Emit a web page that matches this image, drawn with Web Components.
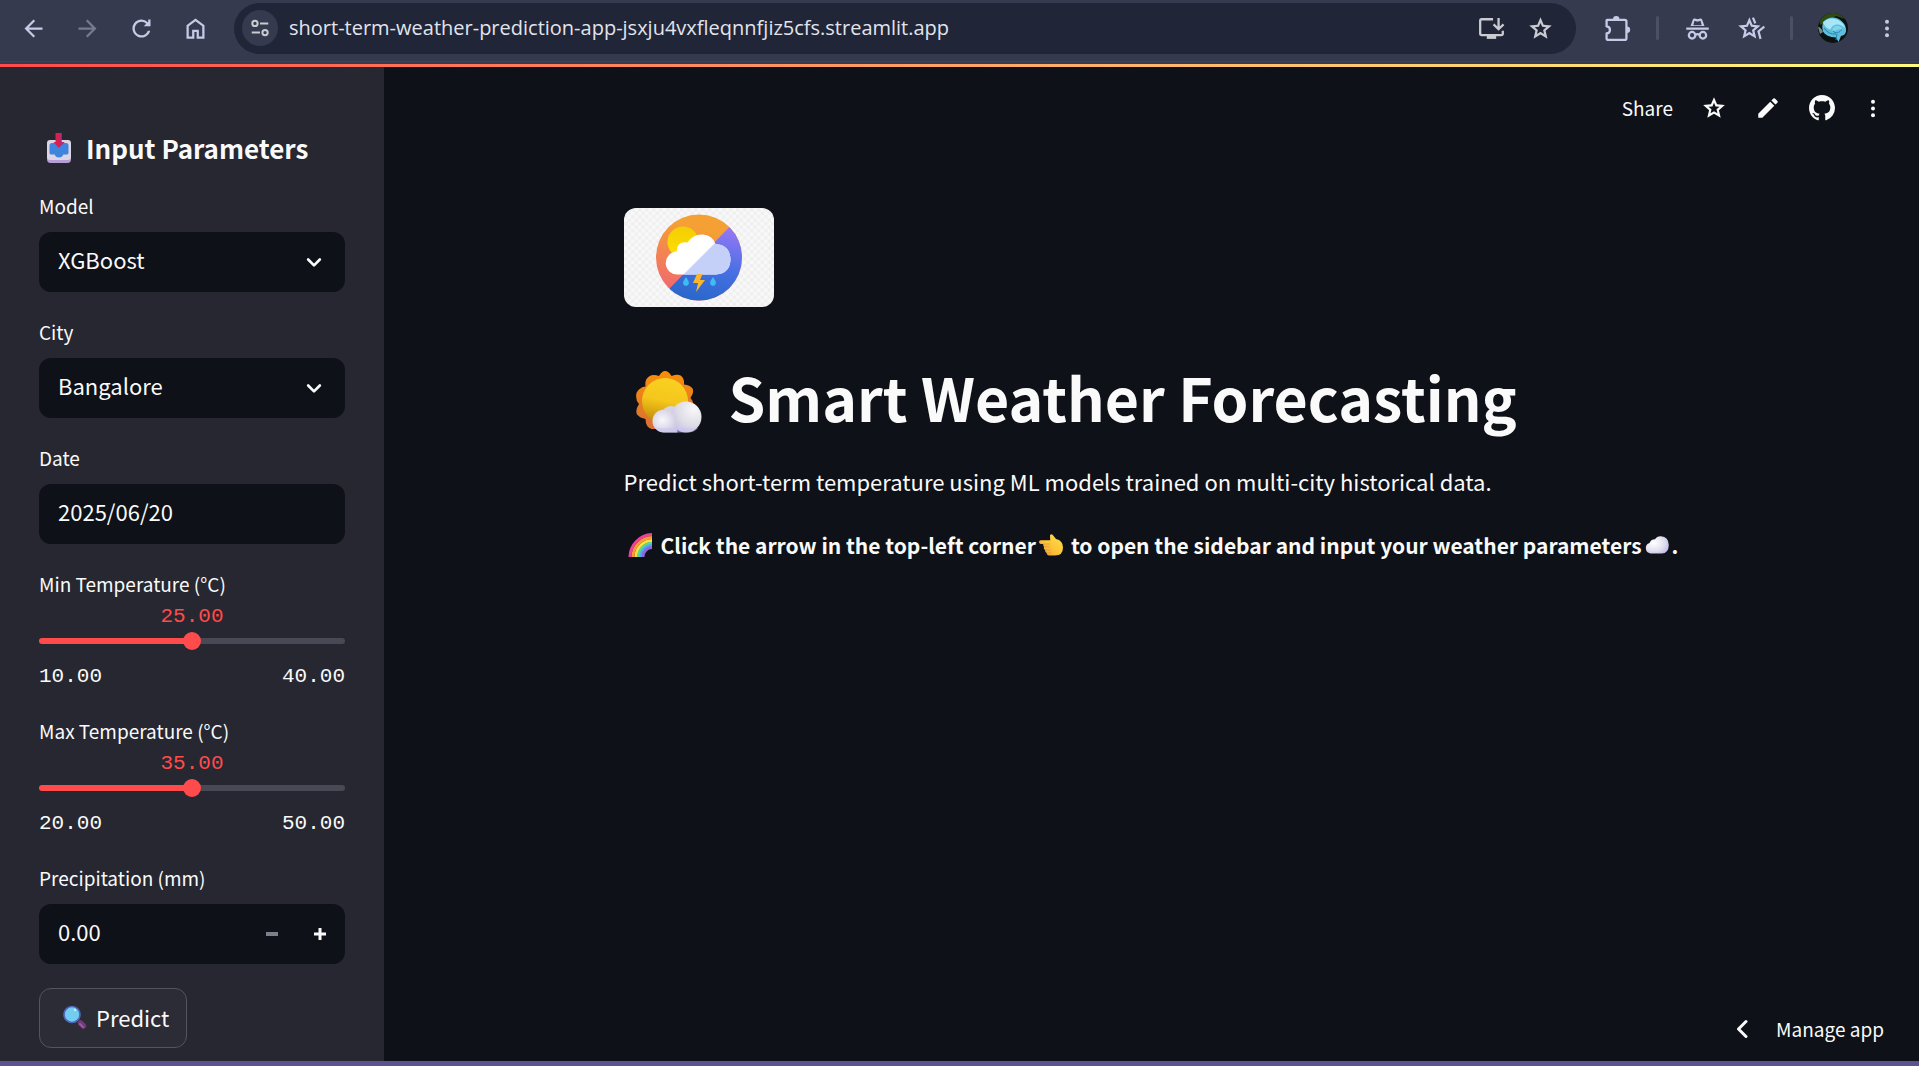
<!DOCTYPE html>
<html lang="en">
<head>
<meta charset="utf-8">
<title>Smart Weather Forecasting</title>
<style>
html, body { margin: 0; height: 100%; }
body {
  background: #0e1117;
  color: #fafafa;
  font-family: "Noto Sans CJK SC", "Noto Sans", sans-serif;
  font-size: 22px;
}
</style>
</head>
<body>
<weather-page></weather-page>

<script>
const ICONS = {
  back: ['0 0 24 24', '<path d="M20 11v2H7.8l5.6 5.6L12 20l-8-8 8-8 1.4 1.4L7.8 11z"/>'],
  forward: ['0 0 24 24', '<path d="M4 11v2h12.2l-5.6 5.6L12 20l8-8-8-8-1.4 1.4 5.6 5.6z"/>'],
  reload: ['0 0 24 24', '<path d="M17.65 6.35A8 8 0 1 0 19.73 14h-2.08A6 6 0 1 1 12 6c1.66 0 3.14.69 4.22 1.78L14 10h6V4h-2v2z"/>'],
  home: ['0 0 24 24', '<path d="M6 19h3v-6h6v6h3v-9l-6-4.5L6 10zM4 21V9l8-6 8 6v12h-7v-6h-2v6z"/>'],
  tune: ['0 0 24 24', '<g fill="none" stroke="currentColor" stroke-width="2.2"><circle cx="6.5" cy="7" r="2.9"/><path d="M12 7h9M3 17h9"/><circle cx="17.5" cy="17" r="2.9"/></g>'],
  install: ['0 0 26 24', '<path fill="none" stroke="currentColor" stroke-width="2.2" d="M14.5 3.1H3.6q-1.5 0-1.5 1.5v12.3q0 1.500 1.500 1.500h18.800q1.500 0 1.500-1.500v-2.700"/><path d="M8.500 18h9v4h-9z"/><path fill="none" stroke="currentColor" stroke-width="2.200" d="M19.800 2v10M15 8l4.800 4.700L24.600 8"/>'],
  star: ['0 0 24 24', '<path d="m8.850 16.825 3.150-1.900 3.150 1.925-.825-3.600 2.775-2.400-3.650-.325-1.450-3.400-1.450 3.375-3.650.325 2.775 2.425zM5.825 21l1.625-7.025L2 9.250l7.200-.625L12 2l2.800 6.625 7.200.625-5.450 4.725L18.175 21 12 17.275z"/>'],
  puzzle: ['0 0 26 26', '<path fill="none" stroke="currentColor" stroke-width="2.200" stroke-linejoin="round" d="M3 4.600h17q1.600 0 1.600 1.600v16.100q0 1.600-1.600 1.600H4q-1.500 0-1.500-1.600v-4.600c4.300-.4 4.300-6.300 0-6.700V5.100z"/><path d="M8.700 4a3.100 3.100 0 0 1 6.200 0zM22 11a3.200 3.200 0 0 1 0 6.400z"/>'],
  incognito: ['0 0 24 24', '<path d="M2 11h20v2H2zM5.800 9.800 8 3.800q.4-1 1.500-.7l1.700.5q.8.200 1.600 0l1.700-.5q1.100-.3 1.500.7l2.200 6z"/><path fill="#353a4e" d="m9.300 5.200 2 .6h1.400l2-.6 1 3.800H8.300z"/><g fill="none" stroke="currentColor" stroke-width="2"><circle cx="7.200" cy="18" r="2.900"/><circle cx="16.800" cy="18" r="2.900"/><path d="M10 17.500q2-1.100 4 0"/></g>'],
  starlines: ['0 0 26 24', '<path d="m8.850 16.825 3.150-1.900 3.150 1.925-.825-3.600 2.775-2.400-3.650-.325-1.450-3.400-1.450 3.375-3.650.325 2.775 2.425zM5.825 21l1.625-7.025L2 9.250l7.200-.625L12 2l2.800 6.625 7.200.625-5.450 4.725L18.175 21 12 17.275z"/><path fill="none" stroke="currentColor" stroke-width="2" d="m15.200 2.200 2.100 5.200M25.400 10.400l-5.200 4.300 1.800 6.600"/>'],
  dots: ['0 0 24 24', '<circle cx="12" cy="4" r="2.400"/><circle cx="12" cy="12" r="2.400"/><circle cx="12" cy="20" r="2.400"/>'],
  avatar: ['0 0 30 30', '<defs><clipPath id="c"><circle cx="15" cy="15" r="15"/></clipPath></defs><g clip-path="url(#c)"><path fill="#0b1210" d="M0 0h30v30H0z"/><path fill="#2f4a12" d="M0 0h30v7L18 3 2 12z"/><path fill="#6f8d86" d="M0 14q3 0 5 5l-3 2z"/><path fill="#5fbddd" d="M5 9q4-4.500 10-4.500 5 0 9 4 4.500 4 4 10-1 4-5 4.500l-2.500 6-2.500-4.500Q8 24 5 18.500q-1.500-5 0-9.500z"/><path fill="#a5e6f7" d="M5 9.500Q12 3 20 7q6 3 7.500 9-4-5-9-4.500-4.500.5-6 5-5-1-7.500-7z"/><path fill="#7fd3ec" d="M14 17q2-5 7-4 4 1 4 5-3-3-6-1-2 2-5 0z"/><path fill="none" stroke="#2587a8" d="M6 15q5 7 12 6M15 18c2 3 7 2 9-2M19 21l-1 6"/></g>'],
  pencil: ['0 0 24 24', '<path d="M3 17.250V21h3.750L17.810 9.940l-3.750-3.750zM20.710 7.040a1 1 0 0 0 0-1.410l-2.340-2.340a1 1 0 0 0-1.410 0l-1.830 1.830 3.750 3.750z"/>'],
  github: ['0 0 16 16', '<path d="M8 0C3.580 0 0 3.580 0 8c0 3.540 2.290 6.530 5.470 7.590.4.070.55-.17.55-.38 0-.19-.01-.82-.01-1.490-2.010.37-2.530-.49-2.690-.94-.09-.23-.48-.94-.82-1.130-.28-.15-.68-.52-.01-.53.63-.01 1.080.58 1.230.82.72 1.210 1.870.87 2.330.66.070-.52.28-.87.51-1.070-1.780-.2-3.640-.89-3.640-3.950 0-.87.31-1.590.82-2.150-.08-.2-.36-1.020.08-2.120 0 0 .67-.21 2.200.82.64-.18 1.320-.27 2-.27s1.360.09 2 .27c1.530-1.040 2.200-.82 2.200-.82.44 1.100.16 1.920.08 2.120.51.56.82 1.270.82 2.150 0 3.070-1.870 3.750-3.650 3.950.29.25.54.73.54 1.480 0 1.070-.01 1.930-.01 2.200 0 .21.15.46.55.38A8.010 8.010 0 0 0 16 8c0-4.420-3.580-8-8-8"/>'],
  chevron: ['0 0 24 24', '<path fill="none" stroke="currentColor" stroke-width="3.200" stroke-linecap="round" stroke-linejoin="round" d="m5 9 7 7 7-7"/>'],
  left: ['0 0 12 20', '<path fill="none" stroke="currentColor" stroke-width="3" stroke-linecap="round" stroke-linejoin="round" d="m10 2.500-7.500 7.500 7.500 7.500"/>'],
  minus: ['0 0 12 12', '<path d="M0 4h12v4H0z"/>'],
  plus: ['0 0 12 12', '<path d="M0 4.500h4.500V0h3v4.500H12v3H7.500V12h-3V7.500H0z"/>'],
  inbox: ['0 0 24 30', '<path fill="#b69fd4" d="M0 22h24v4q0 4-3.500 4h-17Q0 30 0 26z"/><rect y="7" width="24" height="20" rx="3" fill="#dcd5e6"/><path fill="#3f85dc" d="M5 10h14q2.500 0 2.500 2.500v7.500q0 1.500-2 1.500h-3.200q-.8 3-4.300 3t-4.300-3H4.500q-2 0-2-1.500v-7.500Q2.500 10 5 10z"/><path fill="#d8204e" d="M8.500 0h6v9h3L11.800 15 6.500 9h2z"/><path fill="#b32a78" d="M13 0h1.500v9h3L13 13.500z"/>'],
  search: ['0 0 24 24', '<path stroke="#713a79" stroke-width="5.500" stroke-linecap="round" d="m17.500 18 3 3"/><path stroke="#9c5ba0" stroke-width="2" stroke-linecap="round" d="m17 19 3 3"/><circle cx="9" cy="9.500" r="8" fill="#72cdf0" stroke="#5067b8" stroke-width="1.700"/><circle cx="12" cy="5" r="1.200" fill="#c9f0ff"/>'],
  rainbow: ['0 0 24 24', '<g fill="none" stroke-width="3"><path stroke="#ef4196" d="M2 24A23 22.500 0 0 1 24 1.500"/><path stroke="#ff9a3c" d="M5 24A20 19.500 0 0 1 24 4.500"/><path stroke="#ffe04a" d="M8 24A17 16.500 0 0 1 24 7.500"/><path stroke="#5fd78a" d="M10.500 24A14 14 0 0 1 24 10.200"/><path stroke="#56a5f5" d="M12.800 24A11.500 11.500 0 0 1 24 12.600"/><path stroke="#8a68dd" d="M15 24A9 9 0 0 1 24 14.600"/></g>'],
  hand: ['0 0 24 22', '<defs><linearGradient id="h" x1="0" y1="1" x2="1" y2="0"><stop offset="0" stop-color="#ee8f55"/><stop offset=".45" stop-color="#fcc436"/><stop offset="1" stop-color="#ffe04a"/></linearGradient></defs><path fill="url(#h)" d="M1.800 6.300h9.400L11 1.500Q11.800-.6 13.600.8L17 5q7 1.500 7 8.500 0 8-8 8H10q-2.500-.2-2.300-2.600Q5.700 18 6.200 16 4.300 15 5 12.800 3.900 11.700 4.300 10H1.800Q0 9.800 0 8.100t1.800-1.800z"/><path fill="none" stroke="#df9a30" stroke-width=".8" d="M5 12.800h6M6.200 16h5.500M7.700 18.900h4.500M4.300 10h7"/>'],
  cloud: ['0 0 24 18', '<defs><radialGradient id="k" cx=".35" cy=".4" r=".8"><stop offset="0" stop-color="#fff"/><stop offset=".55" stop-color="#e3e0ee"/><stop offset="1" stop-color="#b9b1e6"/></radialGradient></defs><path fill="url(#k)" d="M5.500 17.500A5.400 5.400 0 0 1 4.600 7Q5.500 3.500 10 3.300 12 0 16 .3 23.600 1 23.800 9q-.2 8.300-7 8.500z"/>'],
  sun: ['0 0 66 62', '<defs><linearGradient id="a" x1="0" y1="0" x2="0" y2="1"><stop offset="0" stop-color="#f98f08"/><stop offset="1" stop-color="#d96f38"/></linearGradient><linearGradient id="b" x1=".6" y1="0" x2=".4" y2="1"><stop offset="0" stop-color="#fbd022"/><stop offset=".5" stop-color="#f5c61c"/><stop offset="1" stop-color="#c08a05"/></linearGradient><radialGradient id="d" cx=".75" cy=".25" r=".9"><stop offset="0" stop-color="#f8f8fa"/><stop offset=".6" stop-color="#dddbe4"/><stop offset="1" stop-color="#c4bcec"/></radialGradient><radialGradient id="e" cx=".4" cy=".45" r=".65"><stop offset="0" stop-color="#f8f8fb"/><stop offset="1" stop-color="#cbc6df"/></radialGradient></defs><path fill="url(#a)" d="M29 0q3.500 0 6.500 5 6-2 9-.5 4 2.500 3.500 9 6 .5 8.500 4 2 4-2 9.500 4.500 5 2 9.500L40 58H15.500q-6-2-6-10Q4 47 1 43.500-1 39 3 33-1 29 .5 22q3-6 9-6.500-1-7 3.500-10 4-2.500 10-.500Q26 0 29 0z"/><circle cx="29" cy="30" r="23" fill="url(#b)"/><path fill="#d7d5de" d="M25 44q3-9 10-9 5 0 8 5l-4 14z"/><circle cx="50" cy="46" r="15.500" fill="url(#d)"/><path fill="url(#e)" d="M28 61.500a11.500 11.500 0 1 1 11.500-12l2 12z"/><path fill="#ccc5ef" d="M20 57h42q-4 4.500-10 4.500H28q-5 0-8-4.500z" opacity=".55"/>'],
  logo: ['0 0 150 99', '<defs><pattern id="p" width="7" height="7" patternUnits="userSpaceOnUse"><path fill="#f8f8f8" d="M0 0h7v7H0z"/><path fill="#f0f0f0" d="M0 0h3.500v3.500H0zM3.500 3.500H7V7H3.500z"/></pattern><linearGradient id="o" x1=".6" y1="0" x2=".2" y2="1"><stop offset=".2" stop-color="#f5a034"/><stop offset=".8" stop-color="#f06a6e"/></linearGradient><linearGradient id="v" x1=".7" y1="0" x2=".4" y2="1"><stop offset=".15" stop-color="#9577f4"/><stop offset=".6" stop-color="#456fe3"/><stop offset="1" stop-color="#2867c8"/></linearGradient><linearGradient id="y" x1="0" y1="0" x2="0" y2="1"><stop offset="0" stop-color="#f3cd05"/><stop offset="1" stop-color="#ffe000"/></linearGradient><clipPath id="q"><circle cx="75" cy="49.500" r="43"/></clipPath><clipPath id="r"><path d="M54 66.500a11.500 11.500 0 0 1-1.500-23Q53 33 63.500 34.500 69 26 79 26.500 89 27.500 91.500 36q14.500 1 15 15.500-.5 14-14.500 15z"/></clipPath></defs><path fill="url(#p)" d="M0 0h150v99H0z"/><g clip-path="url(#q)"><path fill="url(#o)" d="M0 0h150v99H0z"/><path fill="url(#v)" d="M105 19.500 46 80v19h104V10z"/></g><circle cx="59" cy="34" r="15.500" fill="url(#y)"/><g clip-path="url(#r)"><path fill="#fff" d="M40 20h80v50H40z"/><path fill="#c5d0f8" d="M100 26 58.500 67.500H112V26z"/></g><path fill="#fbb62c" d="m73 66-4 9h5l-2 9 9-12h-5l2.500-6z"/><path fill="#3dbdf3" d="M62 69q6 8 0 9-6-1 0-9zM89 69q6 8 0 9-6-1 0-9z"/>']
};

function define(name, html) {
  customElements.define(name, class extends HTMLElement {
    constructor() {
      super();
      this.attachShadow({ mode: 'open' });
    }
    connectedCallback() {
      if (this.shadowRoot.childNodes.length) return;
      const t = document.createElement('template');
      t.innerHTML = typeof html === 'function' ? html(this) : html;
      this.shadowRoot.append(t.content.cloneNode(true));
    }
  });
}

/* Drawn icon; its box is set by the user's width and height. */
define('ui-icon', el => {
  const [box, body] = ICONS[el.getAttribute('name')];
  return `<style>
    :host { display: inline-block; flex: none; width: 24px; height: 24px; }
    svg { display: block; width: 100%; height: 100%; }
  </style><svg viewBox="${box}" fill="currentColor" aria-hidden="true">${body}</svg>`;
});

define('icon-button', el => `<style>
    :host { display: block; flex: none; width: 24px; height: 24px; }
    button { display: grid; place-items: center; width: 100%; height: 100%; padding: 0; border: 0; background: none; color: inherit; }
    ui-icon { width: 100%; height: 100%; }
  </style><button type="button" aria-label="${el.getAttribute('label')}"><ui-icon name="${el.getAttribute('icon')}"></ui-icon></button>`);

define('browser-bar', `<style>
    :host { display: flex; align-items: center; height: 62px; box-sizing: border-box; padding: 3px 22px 8px 20px; background: #353a4e; color: #c6cae6; border-bottom: 1px solid #41434f; }
    .nav { display: flex; gap: 27px; }
    .nav icon-button { width: 27px; height: 27px; }
    .dim { opacity: .45; }
    .address { flex: 1; display: flex; align-items: center; gap: 11px; height: 51px; margin: 0 28px 0 25px; padding: 0 22px 0 8px; box-sizing: border-box; border-radius: 26px; background: #202537; color: #c9cbd1; }
    .site { display: grid; place-items: center; width: 36px; height: 36px; border-radius: 50%; background: #353a4e; }
    .site icon-button { width: 22px; height: 22px; }
    input { flex: 1; min-width: 0; padding: 0; border: 0; outline: 0; background: none; color: #e2e4ec; font: 20px/28px "Open Sans", sans-serif; }
    .acts { display: flex; align-items: center; gap: 22px; }
    .acts icon-button { width: 27px; height: 27px; }
    .tools { display: flex; align-items: center; gap: 25px; }
    .tools icon-button { width: 27px; height: 27px; }
    .tools .wide { width: 29px; }
    .tools .photo { width: 30px; height: 30px; }
    .sep { width: 3px; height: 24px; border-radius: 2px; background: #4b5067; }
    .tools .more { width: 20px; height: 25px; margin-left: 4px; }
  </style>
  <nav class="nav" aria-label="Browser">
    <icon-button icon="back" label="Back"></icon-button>
    <icon-button class="dim" icon="forward" label="Forward"></icon-button>
    <icon-button icon="reload" label="Reload"></icon-button>
    <icon-button icon="home" label="Home"></icon-button>
  </nav>
  <div class="address">
    <div class="site"><icon-button icon="tune" label="Site settings"></icon-button></div>
    <input type="text" aria-label="Address" value="short-term-weather-prediction-app-jsxju4vxfleqnnfjiz5cfs.streamlit.app">
    <div class="acts">
      <icon-button icon="install" label="Install"></icon-button>
      <icon-button icon="star" label="Bookmark"></icon-button>
    </div>
  </div>
  <div class="tools">
    <icon-button icon="puzzle" label="Extensions"></icon-button>
    <span class="sep"></span>
    <icon-button icon="incognito" label="Private"></icon-button>
    <icon-button class="wide" icon="starlines" label="Favourites"></icon-button>
    <span class="sep"></span>
    <icon-button class="photo" icon="avatar" label="Profile"></icon-button>
    <icon-button class="more" icon="dots" label="Menu"></icon-button>
  </div>`);

const FIELD = `
    :host { display: block; }
    label { display: block; height: 36px; margin-bottom: 6px; font-size: 19px; line-height: 32px; }
    .box { display: grid; align-items: center; height: 60px; border-radius: 12px; background: #0e1117; }
    select, input { box-sizing: border-box; width: 100%; height: 60px; padding: 0 19px 6px; border: 0; border-radius: 12px; background: none; color: inherit; font: inherit; appearance: none; outline: 0; }`;

define('select-field', el => `<style>${FIELD}
    .box > * { grid-area: 1 / 1; }
    ui-icon { width: 20px; height: 20px; margin-right: 21px; justify-self: end; pointer-events: none; }
  </style>
  <label for="f">${el.getAttribute('label')}</label>
  <div class="box"><select id="f"><option>${el.getAttribute('value')}</option></select><ui-icon name="chevron"></ui-icon></div>`);

define('text-field', el => `<style>${FIELD}</style>
  <label for="f">${el.getAttribute('label')}</label>
  <div class="box"><input id="f" type="text" value="${el.getAttribute('value')}"></div>`);

define('number-field', el => `<style>${FIELD}
    .box { display: flex; }
    input { flex: 1; min-width: 0; appearance: textfield; }
    input::-webkit-inner-spin-button { appearance: none; margin: 0; }
    button { display: grid; place-items: center; width: 48px; height: 60px; padding: 0; border: 0; background: none; color: inherit; }
    button:last-child { margin-right: 1px; }
    button:disabled { color: #7d7e8e; }
    ui-icon { width: 12px; height: 12px; }
  </style>
  <label for="f">${el.getAttribute('label')}</label>
  <div class="box"><input id="f" type="number" step="0.01" value="${el.getAttribute('value')}">
    <button type="button" aria-label="Decrease" disabled><ui-icon name="minus"></ui-icon></button>
    <button type="button" aria-label="Increase"><ui-icon name="plus"></ui-icon></button></div>`);

define('slider-field', el => {
  const a = n => el.getAttribute(n);
  return `<style>
    :host { display: block; --mono: 21px/26px "Liberation Mono", monospace; }
    label { display: block; height: 36px; font-size: 19px; line-height: 32px; }
    output { display: block; text-align: center; color: #ff4b4b; font: var(--mono); }
    input { display: block; width: 100%; height: 18px; margin: 2px 0 14px; appearance: none; background: none; }
    input::-webkit-slider-runnable-track { height: 6px; border-radius: 3px; background: linear-gradient(90deg, #ff4b4b 50%, #484954 50%); }
    input::-webkit-slider-thumb { appearance: none; width: 18px; height: 18px; margin-top: -6px; border-radius: 50%; background: #ff4b4b; }
    .ticks { display: flex; justify-content: space-between; font: var(--mono); padding-bottom: 1px; }
  </style>
  <label for="f">${a('label')}</label>
  <output for="f">${a('value')}</output>
  <input id="f" type="range" min="${a('min')}" max="${a('max')}" value="${a('value')}">
  <div class="ticks"><span>${a('min')}</span><span>${a('max')}</span></div>`;
});

define('app-sidebar', `<style>
    :host { display: flex; flex-direction: column; gap: 24px; width: 384px; flex: none; box-sizing: border-box; padding: 63px 39px 0; background: #262730; }
    h2 { display: flex; align-items: center; gap: 15px; margin: 0; padding-left: 8px; font-size: 26px; line-height: 36px; font-weight: 600; white-space: nowrap; }
    h2 ui-icon { width: 24px; height: 30px; }
    .predict { display: flex; align-items: center; gap: 9px; align-self: start; height: 60px; padding: 0 17px 2px 23px; border: 1px solid #53545f; border-radius: 12px; background: #2b2c36; color: inherit; font: inherit; }
  </style>
  <h2><ui-icon name="inbox"></ui-icon>Input Parameters</h2>
  <select-field label="Model" value="XGBoost"></select-field>
  <select-field label="City" value="Bangalore"></select-field>
  <text-field label="Date" value="2025/06/20"></text-field>
  <slider-field label="Min Temperature (°C)" min="10.00" max="40.00" value="25.00"></slider-field>
  <slider-field label="Max Temperature (°C)" min="20.00" max="50.00" value="35.00"></slider-field>
  <number-field label="Precipitation (mm)" value="0.00"></number-field>
  <button class="predict" type="button"><ui-icon name="search"></ui-icon>Predict</button>`);

define('app-toolbar', `<style>
    :host { display: flex; justify-content: flex-end; align-items: center; gap: 28px; height: 82px; padding-right: 36px; }
    button { padding: 0; border: 0; background: none; color: inherit; font: inherit; font-size: 19px; line-height: 28px; }
    icon-button { width: 26px; height: 26px; }
    .dots { width: 20px; height: 23px; }
  </style>
  <button type="button">Share</button>
  <icon-button icon="star" label="Favourite"></icon-button>
  <icon-button icon="pencil" label="Edit"></icon-button>
  <icon-button icon="github" label="GitHub"></icon-button>
  <icon-button class="dots" icon="dots" label="More"></icon-button>`);

define('app-main', `<style>
    :host { display: flex; flex-direction: column; flex: 1; min-width: 0; }
    main { flex: 1; width: 1056px; max-width: 100%; margin: 59px auto 0; box-sizing: border-box; }
    .logo { display: block; width: 150px; height: 99px; border-radius: 12px; overflow: hidden; }
    h1 { display: flex; align-items: flex-end; gap: 27px; margin: 50px 0 26px; padding-left: 12px; font-size: 59px; line-height: 80px; font-weight: 700; white-space: nowrap; }
    h1 ui-icon { width: 66px; height: 62px; padding-bottom: 4px; }
    p { margin: 0 0 28px; line-height: 36px; white-space: nowrap; }
    .tip { display: flex; align-items: center; font-size: 21px; font-weight: 600; }
    .rainbow { margin: 0 9px 0 4px; }
    .hand { height: 22px; margin: 0 8px 0 3px; }
    .cloud { height: 18px; margin: 0 3px; }
    footer { display: flex; justify-content: flex-end; padding: 0 35px 18px 0; }
    footer button { display: flex; align-items: center; gap: 28px; padding: 0; border: 0; background: none; color: inherit; font: inherit; font-size: 19px; line-height: 28px; }
    footer ui-icon { width: 12px; height: 20px; }
  </style>
  <app-toolbar></app-toolbar>
  <main>
    <ui-icon class="logo" name="logo"></ui-icon>
    <h1><ui-icon name="sun"></ui-icon>Smart Weather Forecasting</h1>
    <p>Predict short-term temperature using ML models trained on multi-city historical data.</p>
    <p class="tip"><ui-icon class="rainbow" name="rainbow"></ui-icon><span>Click the arrow in the top-left corner</span><ui-icon class="hand" name="hand"></ui-icon><span>to open the sidebar and input your weather parameters</span><ui-icon class="cloud" name="cloud"></ui-icon><span>.</span></p>
  </main>
  <footer><button type="button"><ui-icon name="left"></ui-icon>Manage app</button></footer>`);

define('weather-page', `<style>
    :host { display: flex; flex-direction: column; min-height: 100vh; box-sizing: border-box; border-bottom: 5px solid #5b5290; }
    .line { height: 3px; margin-top: 2px; background: linear-gradient(90deg, #ff4b4b, #fffd80); }
    .app { display: flex; flex: 1; }
    .top { background: #353a4e; }
  </style>
  <div class="top"><browser-bar></browser-bar><div class="line"></div></div>
  <div class="app"><app-sidebar></app-sidebar><app-main></app-main></div>`);
</script>
</body>
</html>
